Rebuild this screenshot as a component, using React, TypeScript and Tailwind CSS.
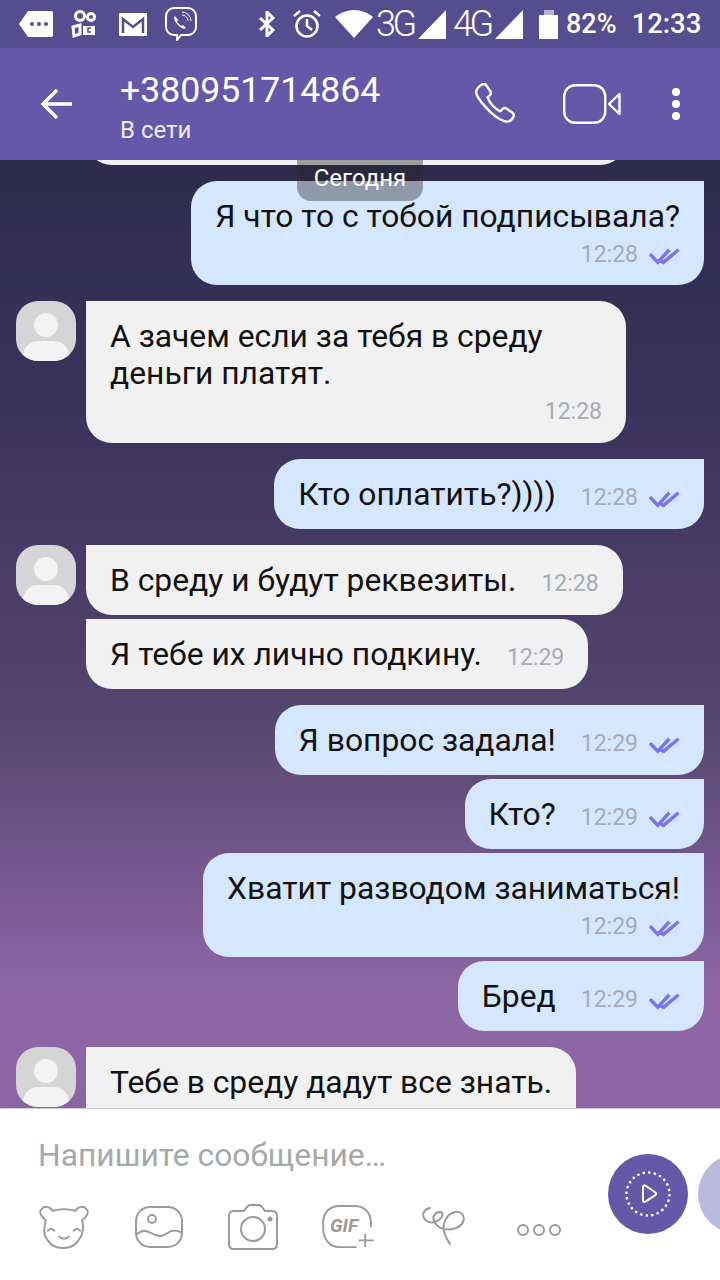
import { ReactNode } from "react";

const font = "font-['Roboto',sans-serif]";

const Checks = () => (
  <svg width="31" height="17" viewBox="0 0 32 17" className="ml-[11px] mt-[4px]" fill="none" stroke="#7b72ee" strokeWidth="3.600">
    <path d="M1 6l8 8.500L21 1.500" />
    <path d="M12 13l3 1.500L30.500 1.500" />
  </svg>
);

const Time = ({ time, out }: { time: string; out?: boolean }) => (
  <div className="flex h-[34px] items-center pt-[5px]">
    <span className="text-[23px] leading-[29px] text-[#a6abb8]">{time}</span>
    {out && <Checks />}
  </div>
);

const Avatar = () => (
  <div className="relative h-[60px] w-[60px] shrink-0 overflow-hidden rounded-[22px] bg-[#d5d5d8]">
    <div className="mx-auto mt-[12px] h-[24px] w-[24px] rounded-full bg-[#f3f3f4]" />
    <div className="mx-auto mt-[4px] h-[30px] w-[46px] rounded-full bg-[#f3f3f4]" />
  </div>
);

type BubbleProps = {
  text: ReactNode;
  time?: string;
  out?: boolean;
  stacked?: boolean;
  size?: string;
};

const Bubble = ({ text, time, out, stacked, size = "w-fit" }: BubbleProps) => {
  const shape = out
    ? "rounded-[26px] rounded-tr-none bg-[#d5e7ff]"
    : "rounded-[26px] rounded-tl-none bg-[#f1f1f1]";
  return (
    <div className={`px-[24px] pb-[16px] pt-[17px] ${size} ${shape}`}>
      {stacked ? (
        <div className="flex flex-col">
          <p className="whitespace-nowrap text-[31.800px] leading-[37px] text-[#111]">{text}</p>
          {time && (
            <div className="flex justify-end">
              <Time time={time} out={out} />
            </div>
          )}
        </div>
      ) : (
        <div className="flex items-center gap-[25px]">
          <p className="whitespace-nowrap text-[31.800px] leading-[37px] text-[#111]">{text}</p>
          {time && <Time time={time} out={out} />}
        </div>
      )}
    </div>
  );
};

const Outgoing = ({ children }: { children: ReactNode }) => (
  <div className="flex flex-col items-end gap-[4px] pr-[16px]">{children}</div>
);

const Incoming = ({ children }: { children: ReactNode }) => (
  <div className="flex gap-[10px] pl-[16px]">
    <Avatar />
    <div className="flex flex-col items-start gap-[4px]">{children}</div>
  </div>
);

const StatusBar = () => (
  <div className="flex h-[48px] items-center bg-[#564c90] pl-[19px] text-white">
    <svg width="34" height="26" viewBox="0 0 34 26">
      <path d="M9 0h23a2 2 0 0 1 2 2v22a2 2 0 0 1-2 2H9L0 13z" fill="#fff" />
      <circle cx="13" cy="13" r="2" fill="#564c90" />
      <circle cx="20" cy="13" r="2" fill="#564c90" />
      <circle cx="27" cy="13" r="2" fill="#564c90" />
    </svg>
    <svg width="26" height="28" viewBox="0 0 26 28" className="ml-[18px]" fill="none" stroke="#fff" strokeWidth="3">
      <circle cx="9" cy="6" r="4.500" />
      <circle cx="20" cy="7" r="3.500" />
      <path d="M2 17l7-2v9l-6 2z" />
      <path d="M12 16h12v9H12z" fill="#fff" stroke="none" />
      <path d="M20 18h-3v4h3" stroke="#564c90" strokeWidth="1.500" />
    </svg>
    <svg width="28" height="23" viewBox="0 0 28 23" className="ml-[22px]">
      <path d="M1 0h26a1 1 0 0 1 1 1v21a1 1 0 0 1-1 1H1a1 1 0 0 1-1-1V1a1 1 0 0 1 1-1z" fill="#fff" />
      <path d="M4 20V6l10 8 10-8v14" fill="none" stroke="#564c90" strokeWidth="2.500" />
    </svg>
    <svg width="32" height="34" viewBox="0 0 32 34" className="ml-[18px]" fill="none" stroke="#fff" strokeWidth="2">
      <path d="M9 1h14a8 8 0 0 1 8 8v11a8 8 0 0 1-8 8h-7l-4 5v-5H9a8 8 0 0 1-8-8V9a8 8 0 0 1 8-8z" />
      <path d="M10 9c-2 2 0 6 3 9s6 5 8 3l-3-3-2 1-4-4 1-2z" fill="#fff" stroke="none" />
      <path d="M17 8a6 6 0 0 1 6 6M17 5a9 9 0 0 1 9 9" strokeWidth="1" />
    </svg>
    <svg width="18" height="26" viewBox="0 0 18 26" className="ml-[61px]" fill="none" stroke="#fff" strokeWidth="3">
      <path d="M2 7l13 12-6 6V1l6 6L2 19" />
    </svg>
    <svg width="28" height="28" viewBox="0 0 28 28" className="ml-[17px]" fill="none" stroke="#fff" strokeWidth="2.500">
      <circle cx="14" cy="16" r="10.500" />
      <path d="M14 9v7l5 4M1 6l6-5M27 6l-6-5" />
    </svg>
    <svg width="38" height="28" viewBox="0 0 38 28" className="ml-[14px]">
      <path d="M0 7C5 3 12 0 19 0s14 3 19 7L19 28z" fill="#fff" />
    </svg>
    <span className="ml-[3px] w-[38px] text-[36px] font-light leading-none tracking-[-3.500px]">3G</span>
    <svg width="28" height="29" viewBox="0 0 28 29" className="ml-[4px]">
      <path d="M28 0v29H0z" fill="#fff" />
    </svg>
    <span className="ml-[7px] w-[38px] text-[36px] font-light leading-none tracking-[-3.500px]">4G</span>
    <svg width="28" height="29" viewBox="0 0 28 29" className="ml-[4px]">
      <path d="M28 0v29H0z" fill="#fff" />
    </svg>
    <div className="ml-[16px] flex h-[29px] w-[19px] flex-col">
      <div className="mx-auto h-[5px] w-[10px] bg-[#b9b5d0]" />
      <div className="h-[24px] bg-white" />
    </div>
    <span className="ml-[8px] text-[27px] font-medium leading-none">82%</span>
    <span className="ml-[15px] text-[27.500px] font-medium leading-none">12:33</span>
  </div>
);

const Header = () => (
  <div className="flex h-[112px] items-center bg-[#6558a9] text-white">
    <svg width="32" height="32" viewBox="0 0 32 32" className="ml-[40px]" fill="none" stroke="#fff" strokeWidth="3.400">
      <path d="M32 16H3M17 2L3 16l14 14" />
    </svg>
    <div className="ml-[48px] w-[353px] pt-[12px]">
      <div className="text-[35.600px] leading-[40px]">+380951714864</div>
      <div className="text-[24px] leading-[40px] text-[#ecebf6]">В сети</div>
    </div>
    <svg width="42" height="42" viewBox="0 0 42 42" className="mb-[1px]" fill="none" stroke="#fff" strokeWidth="2.400" strokeLinejoin="round">
      <path d="M9 1.500c2-1 3.500-.5 4.500 1l4 6c.8 1.400.5 2.800-.7 3.800l-2.300 1.900c1 3 2.700 5.800 5 8.300s5 4.500 7.800 5.800l2.300-2.300c1-1 2.400-1.200 3.700-.4l6 4c1.500 1.100 2 2.700 1 4.500-1 1.900-2.600 4-5.300 4.500-3.500.6-11-3-17.500-9.500S2 13 3.300 8C4 5 6.500 3 9 1.500z" />
    </svg>
    <svg width="58" height="40" viewBox="0 0 58 40" className="mb-[1px] ml-[48px]" fill="none" stroke="#fff" strokeWidth="2.400" strokeLinejoin="round">
      <rect x="1.200" y="1.200" width="41" height="37.600" rx="11" />
      <path d="M56.500 10v20L46 20z" />
    </svg>
    <div className="mb-[1px] ml-[51px] flex flex-col gap-[4px]">
      <div className="h-[8px] w-[8px] rounded-full bg-white" />
      <div className="h-[8px] w-[8px] rounded-full bg-white" />
      <div className="h-[8px] w-[8px] rounded-full bg-white" />
    </div>
  </div>
);

const Composer = () => (
  <div className="relative h-[172px] overflow-hidden border-t border-[#cfcfcf] bg-white">
    <div className="pl-[38px] pt-[28px] text-[31.800px] leading-[36px] text-[#a6a9ac]">Напишите сообщение…</div>
    <div className="mt-[32px] flex items-start pl-[38px]">
      {/* bear */}
      <svg width="52" height="44" viewBox="0 0 52 46" fill="none" stroke="#9a9a9a" strokeWidth="2">
        <path d="M7 16C2 12 0 8 2 5s6-4 9-2c1 .6 2 2 3 3 7-2 17-2 24 0 1-1 2-2.400 3-3 3-2 7-1 9 2s0 7-5 11c2 8 1 15-4 21-4 6-10 8-15 8h-2c-5 0-11-2-15-8C4 31 5 24 7 16z" />
        <path d="M9 27c2-3 5-3 7 0M36 27c2-3 5-3 7 0M21 33c2 3 8 3 10 0" strokeLinecap="round" />
      </svg>
      {/* picture */}
      <svg width="48" height="42" viewBox="0 0 48 42" className="ml-[45px] mt-[1px]" fill="none" stroke="#9a9a9a" strokeWidth="2">
        <rect x="1" y="1" width="46" height="40" rx="14" />
        <circle cx="17" cy="13" r="4" />
        <path d="M1 29c5-5 10-5 15-2s10 5 15 1 10-5 16-1" />
      </svg>
      {/* camera */}
      <svg width="52" height="46" viewBox="0 0 52 46" className="ml-[45px] mt-[-1px]" fill="none" stroke="#9a9a9a" strokeWidth="2" strokeLinejoin="round">
        <path d="M6 7h10l3-4c1-1 2-2 3-2h9c1 0 2 1 3 2l3 4h7c3 0 5 2 5 5v28c0 3-2 5-5 5H6c-3 0-5-2-5-5V12c0-3 2-5 5-5z" />
        <circle cx="25" cy="25" r="12" />
        <circle cx="42" cy="15" r="1.500" fill="#9a9a9a" />
      </svg>
      {/* gif */}
      <div className="relative ml-[41px] h-[44px] w-[56px]">
        <svg width="56" height="44" viewBox="0 0 56 46" fill="none" stroke="#9a9a9a" strokeWidth="2">
          <path d="M36 44H18C8 44 1 36 1 24v-6C1 8 8 1 18 1h16c10 0 17 7 17 18v4" />
          <path d="M45 30v14M38 37h16" />
        </svg>
        <span className="absolute left-[9px] top-[9px] text-[19px] font-bold italic leading-[24px] text-[#9a9a9a]">GIF</span>
      </div>
      {/* doodle */}
      <svg width="44" height="39" viewBox="0 0 44 39" className="ml-[45px] mt-[2px]" fill="none" stroke="#9a9a9a" strokeWidth="2" strokeLinecap="round">
        <path d="M8 1C2 2 0 7 2 11c3 5 10 6 15 2 4-3 5-8 1-8-5 0-8 5-6 9 3 7 12 11 22 7 8-3 10-11 5-15-6-4-15 2-17 11-2 7 2 14 6 20" />
      </svg>
      {/* more */}
      <svg width="44" height="12" viewBox="0 0 44 12" className="ml-[51px] mt-[19px]" fill="none" stroke="#9a9a9a" strokeWidth="2">
        <circle cx="6" cy="6" r="5" />
        <circle cx="22" cy="6" r="5" />
        <circle cx="38" cy="6" r="5" />
      </svg>
    </div>
    <div className="absolute left-[608px] top-[45px] flex h-[80px] w-[80px] items-center justify-center rounded-full bg-[#6558a9]">
      <svg width="46" height="46" viewBox="0 0 46 46" fill="none" stroke="#fff">
        <circle cx="23" cy="23" r="21.500" strokeWidth="2.400" strokeDasharray="2.400 3.200" />
        <path d="M18 16c0-1.500 1.200-2 2.400-1.300l10 6.800c1 .7 1 2 0 2.700l-10 6.500c-1.200.7-2.400.2-2.400-1.300z" strokeWidth="2" />
      </svg>
    </div>
    <div className="absolute left-[698px] top-[45px] h-[80px] w-[80px] rounded-full bg-[#b9bbdd]" />
  </div>
);

const App = () => {
  return (
    <div className={`flex h-[1280px] w-[720px] flex-col overflow-hidden ${font}`}>
      <StatusBar />
      <Header />
      <div className="relative min-h-0 flex-1 overflow-hidden bg-[linear-gradient(180deg,#2e2b4c_0%,#3d3560_30%,#54456f_58%,#8f66a6_88%,#8c63a3_100%)]">
        <div className="ml-[86px] mt-[-55px] h-[60px] w-[540px] rounded-b-[26px] bg-[#f1f1f1]" />
        <div className="mt-[16px] flex flex-col gap-[16px]">
          <Outgoing>
            <Bubble out stacked text="Я что то с тобой подписывала?" time="12:28" />
          </Outgoing>
          <Incoming>
            <Bubble
              stacked
              size="h-[142px] w-[540px]"
              text={
                <>
                  А зачем если за тебя в среду
                  <br />
                  деньги платят.
                </>
              }
              time="12:28"
            />
          </Incoming>
          <Outgoing>
            <Bubble out text="Кто оплатить?))))" time="12:28" />
          </Outgoing>
          <Incoming>
            <Bubble text="В среду и будут реквезиты." time="12:28" />
            <Bubble text="Я тебе их лично подкину." time="12:29" />
          </Incoming>
          <Outgoing>
            <Bubble out text="Я вопрос задала!" time="12:29" />
            <Bubble out text="Кто?" time="12:29" />
            <Bubble out stacked text="Хватит разводом заниматься!" time="12:29" />
            <Bubble out text="Бред" time="12:29" />
          </Outgoing>
          <Incoming>
            <Bubble stacked size="h-[104px] w-fit" text="Тебе в среду дадут все знать." />
          </Incoming>
        </div>
        <div className="absolute left-[297px] top-0 flex h-[41px] w-[126px] items-center justify-center rounded-b-[14px] bg-[#252525]/40 pb-[5px] text-[24px] text-white">
          Сегодня
        </div>
      </div>
      <Composer />
    </div>
  );
};

export default App;
